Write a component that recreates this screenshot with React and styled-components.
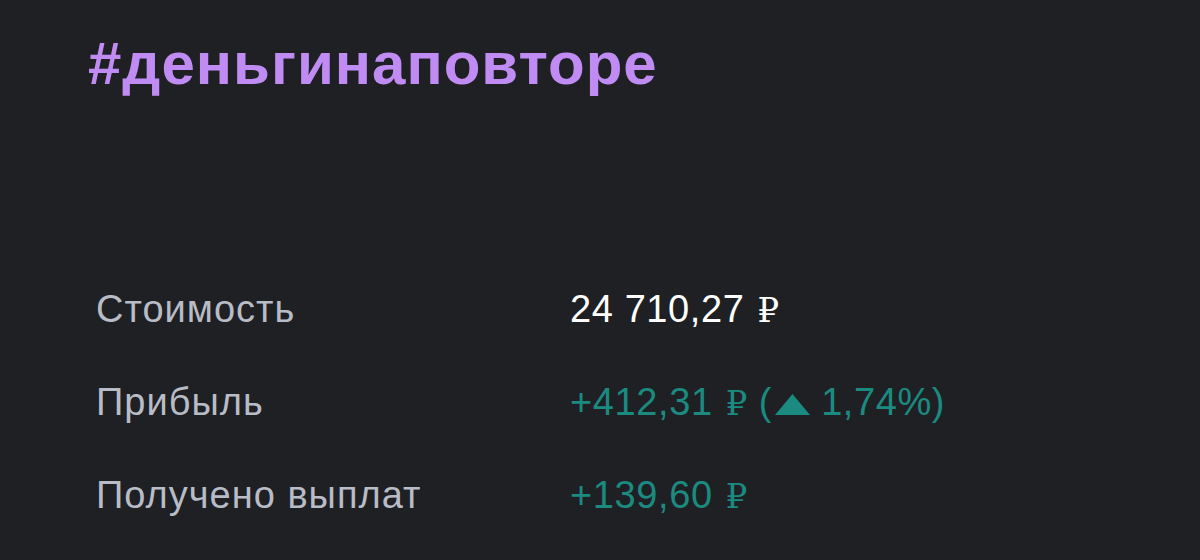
import React from 'react';
import styled, { createGlobalStyle } from 'styled-components';

const Global = createGlobalStyle`
  html, body {
    margin: 0;
    padding: 0;
    background: #1f2024;
  }
  body {
    font-family: "Liberation Sans", Arial, sans-serif;
  }
`

const Page = styled.div`
  width: 1200px;
  height: 560px;
  box-sizing: border-box;
  padding: 34px 0 0 88px;
  background: #1f2024;
  overflow: hidden;
`

const Tag = styled.h1`
  margin: 0;
  font-size: 60px;
  line-height: 1;
  font-weight: 700;
  color: #c08cf3;
  letter-spacing: 1px;
`

const Stats = styled.div`
  display: grid;
  grid-template-columns: 474px auto;
  row-gap: 47px;
  margin: 193px 0 0 8px;
  font-size: 38px;
  line-height: 44px;
`

const Label = styled.div`
  color: #b8bcc6;
  letter-spacing: 1px;
`

const Value = styled.div`
  display: flex;
  align-items: baseline;
  letter-spacing: 0.6px;
  color: ${p => (p.$positive ? '#1b8a80' : '#ffffff')};
`

const Rub = styled.span`
  font-family: "Liberation Serif", "DejaVu Serif", serif;
  font-size: 34px;
  margin-left: 13px;
`

const Change = styled.span`
  margin-left: 11px;
  display: inline-flex;
  align-items: baseline;
`

const Arrow = styled.svg`
  width: 35px;
  height: 21px;
  margin: 0 11px 0 3px;
  fill: currentColor;
`

const Up = () => (
  <Arrow viewBox="0 0 35 21">
    <polygon points="17.5,0 35,21 0,21" />
  </Arrow>
)

export default function App() {
  return (
    <Page>
      <Global />
      <Tag>#деньгинаповторе</Tag>
      <Stats>
        <Label>Стоимость</Label>
        <Value>24 710,27<Rub>₽</Rub></Value>
        <Label>Прибыль</Label>
        <Value $positive>
          +412,31<Rub>₽</Rub>
          <Change>(<Up />1,74%)</Change>
        </Value>
        <Label>Получено выплат</Label>
        <Value $positive>+139,60<Rub>₽</Rub></Value>
      </Stats>
    </Page>
  )
}
